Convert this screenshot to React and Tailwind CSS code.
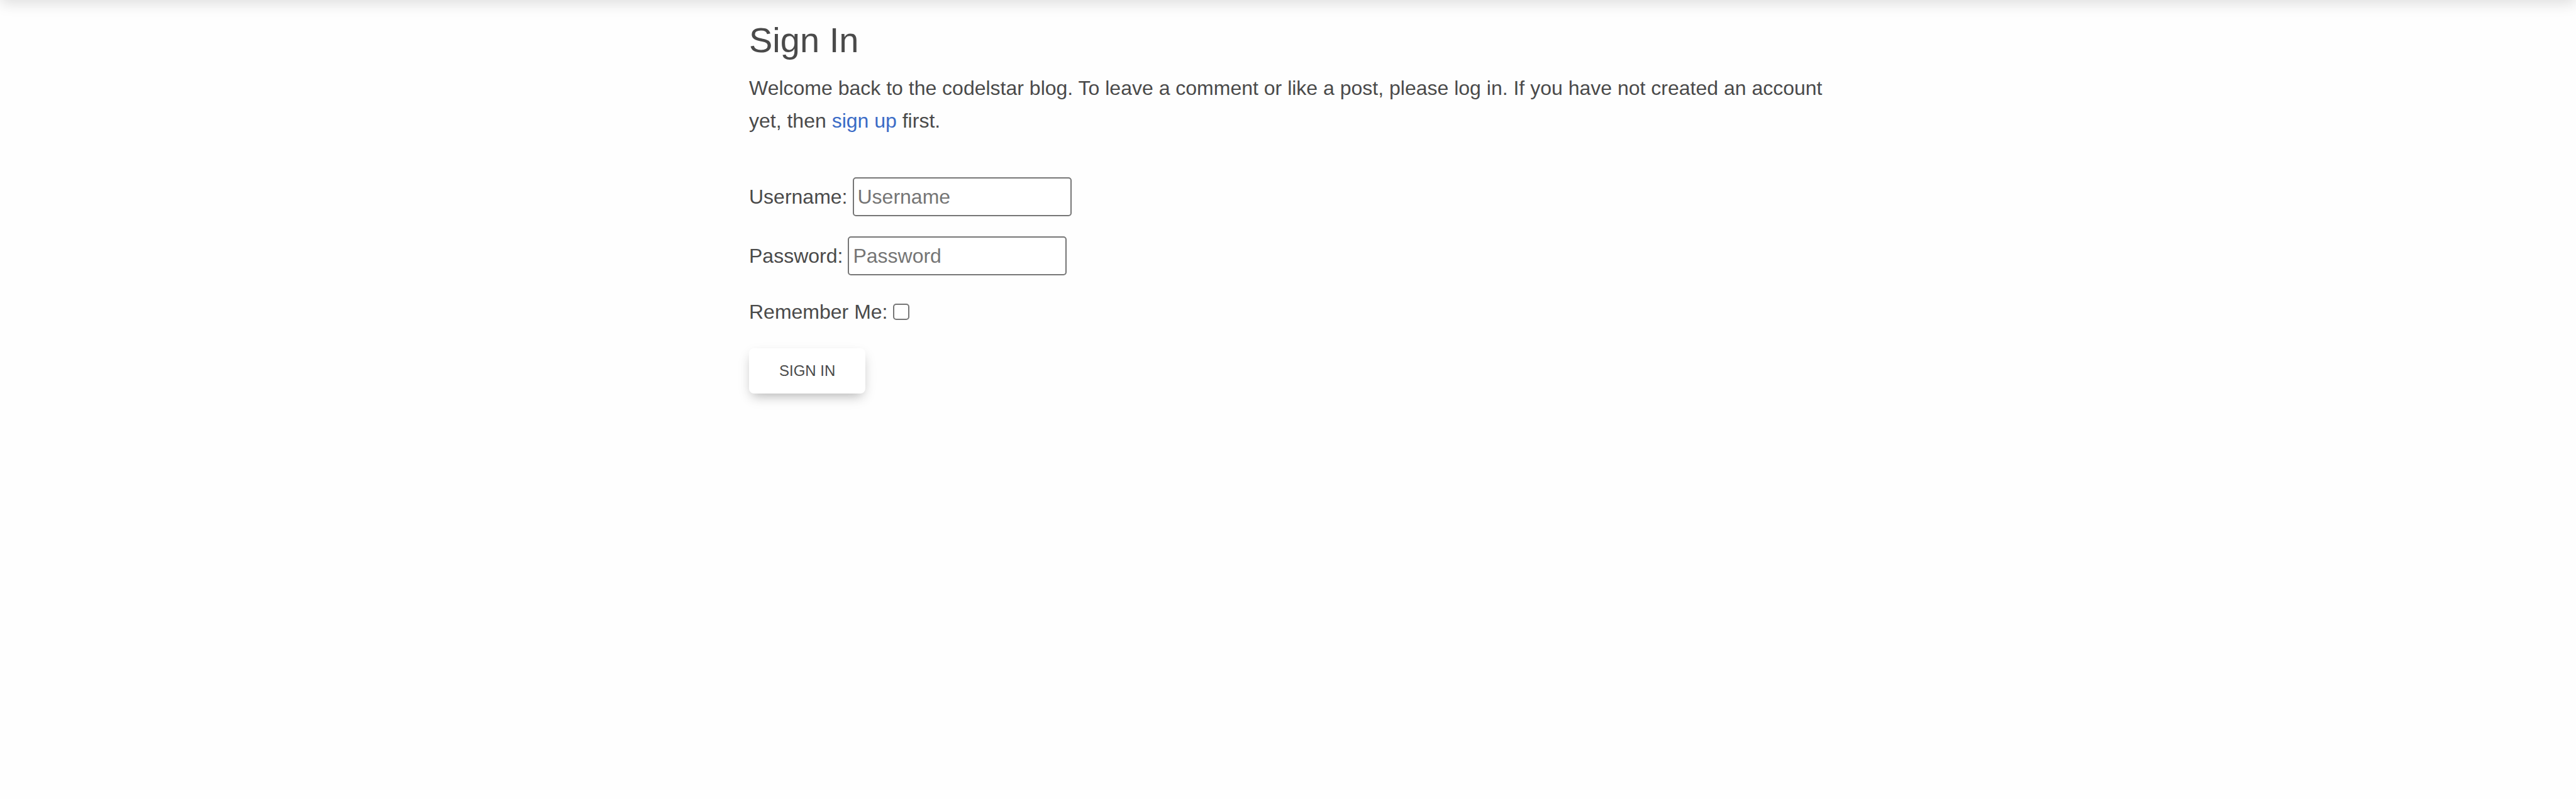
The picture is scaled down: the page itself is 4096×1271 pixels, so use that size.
function Field({ id, label, type }) {
  return (
    <div className="flex items-center gap-2">
      <label htmlFor={id}>{label}:</label>
      <input
        id={id}
        name={id}
        type={type}
        placeholder={label}
        className="h-[62px] w-[348px] rounded-[5px] border-2 border-[#767676] bg-white px-1.5 placeholder:text-[#757575] placeholder:opacity-100"
      />
    </div>
  );
}

export default function App() {
  return (
    <div className="min-h-screen overflow-hidden bg-[#fefefe] font-['Liberation_Sans',Arial,sans-serif] text-[32px] leading-[52px] text-[#4a4a4a]">
      <header className="-mt-16 h-16 shadow-[0_8px_24px_0_rgba(0,0,0,0.07),0_4px_20px_0_rgba(0,0,0,0.06)]" />
      <main className="mx-auto max-w-[1714px] pt-[30px]">
        <h1 className="text-[56px] leading-[68px] font-normal">Sign In</h1>
        <p className="mt-4">
          Welcome back to the codelstar blog. To leave a comment or like a post, please log in. If you
          have not created an account yet, then{" "}
          <a href="#signup" className="text-[#3a6bc6]">
            sign up
          </a>{" "}
          first.
        </p>
        <form className="mt-16 flex flex-col items-start" onSubmit={(e) => e.preventDefault()}>
          <div className="flex flex-col gap-8">
            <Field id="username" label="Username" type="text" />
            <Field id="password" label="Password" type="password" />
          </div>
          <div className="mt-8 flex items-center gap-2">
            <label htmlFor="remember">Remember Me:</label>
            <input
              id="remember"
              type="checkbox"
              className="size-[26px] appearance-none rounded-[5px] border-2 border-[#767676] bg-white checked:bg-[#1266f1]"
            />
          </div>
          <button
            type="submit"
            className="mt-8 rounded-lg bg-white px-12 py-[18px] text-2xl leading-9 uppercase shadow-[0_8px_18px_-6px_rgba(0,0,0,0.28),0_8px_24px_0_rgba(0,0,0,0.06)]"
          >
            Sign in
          </button>
        </form>
      </main>
    </div>
  );
}
